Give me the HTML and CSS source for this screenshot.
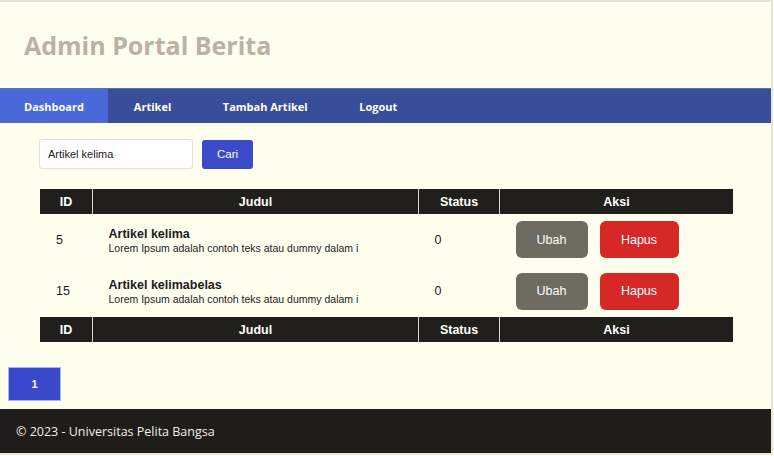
FILE: index.html
```html
<!DOCTYPE html>
<html lang="id">
<head>
<meta charset="utf-8">
<title>Admin Portal Berita</title>
<link rel="stylesheet" href="styles.css">
</head>
<body>
<div class="container">
  <header class="site-header">
    <h1 class="title">Admin Portal Berita</h1>
  </header>
  <nav class="nav">
    <a class="nav-item active" href="#">Dashboard</a>
    <a class="nav-item" href="#">Artikel</a>
    <a class="nav-item" href="#">Tambah Artikel</a>
    <a class="nav-item" href="#">Logout</a>
  </nav>
  <main class="main">
    <form class="search">
      <input class="search-input" type="text" value="Artikel kelima">
      <button class="btn btn-search" type="button">Cari</button>
    </form>
    <table class="table">
      <thead>
        <tr><th class="c-id">ID</th><th class="c-judul">Judul</th><th class="c-status">Status</th><th class="c-aksi">Aksi</th></tr>
      </thead>
      <tbody>
        <tr>
          <td>5</td>
          <td><div class="judul">Artikel kelima</div><div class="desc">Lorem Ipsum adalah contoh teks atau dummy dalam i</div></td>
          <td>0</td>
          <td><div class="aksi"><a class="btn btn-ubah" href="#">Ubah</a><a class="btn btn-hapus" href="#">Hapus</a></div></td>
        </tr>
        <tr>
          <td>15</td>
          <td><div class="judul">Artikel kelimabelas</div><div class="desc">Lorem Ipsum adalah contoh teks atau dummy dalam i</div></td>
          <td>0</td>
          <td><div class="aksi"><a class="btn btn-ubah" href="#">Ubah</a><a class="btn btn-hapus" href="#">Hapus</a></div></td>
        </tr>
      </tbody>
      <tfoot>
        <tr><th>ID</th><th>Judul</th><th>Status</th><th>Aksi</th></tr>
      </tfoot>
    </table>
    <div class="pagination"><a class="page active" href="#">1</a></div>
  </main>
  <footer class="footer">© 2023 - Universitas Pelita Bangsa</footer>
</div>
</body>
</html>
```
FILE: styles.css
```css
html, body {
  margin: 0;
  padding: 0;
  background: #fefeef;
}
.container {
  width: 771px;
  border-top: 2px solid #e8e3d8;
  border-right: 2px solid #ebe4d8;
  border-bottom: 2px solid #ebe4d8;
  background: #fefeef;
  font-family: "Liberation Sans", Arial, sans-serif;
}
.site-header {
  height: 86px;
  display: flex;
  align-items: center;
  padding-left: 24px;
}
.title {
  margin: 0;
  font-family: "Open Sans", sans-serif;
  font-weight: 700;
  font-size: 25px;
  color: #bab1a7;
}
.nav {
  display: flex;
  height: 35px;
  background: #384e9b;
  border-top: 1px solid #5b6fae;
  box-sizing: border-box;
}
.nav-item {
  display: flex;
  align-items: center;
  padding: 0 25.5px 0 26px;
  font-family: "Open Sans", sans-serif;
  font-weight: 700;
  font-size: 11px;
  color: #ffffff;
  text-decoration: none;
}
.nav-item.active {
  padding: 0 24px;
  background: #4a69d8;
}
.main {
  padding-top: 16px;
}
.search {
  display: flex;
  gap: 9px;
  margin: 0 0 0 39px;
  align-items: center;
}
.search-input {
  width: 154px;
  height: 30px;
  box-sizing: border-box;
  border: 1px solid #ecdcd4;
  border-radius: 3px;
  background: #ffffff;
  padding: 0 8px;
  font-family: "Liberation Sans", Arial, sans-serif;
  font-size: 11px;
  color: #222;
}
.btn-search {
  width: 51px;
  height: 29px;
  border: 0;
  border-radius: 3px;
  background: #3a4ac8;
  color: #fff;
  font-family: "Liberation Sans", Arial, sans-serif;
  font-size: 11.5px;
}
.table {
  margin: 20px 0 0 40px;
  width: 693px;
  border-collapse: collapse;
  table-layout: fixed;
  color: #222;
}
.table th {
  background: #211f1b;
  color: #ffffff;
  font-size: 12.5px;
  font-weight: 700;
  height: 25px;
  padding: 0;
  border-left: 1px solid #d8d4cc;
  text-align: center;
}
.table th:first-child {
  border-left: 0;
}
.c-id { width: 52px; }
.c-judul { width: 325px; }
.c-status { width: 80px; }
.table td {
  height: 51px;
  padding: 0 0 0 16px;
  font-size: 12.5px;
  vertical-align: middle;
}
.table tbody tr:last-child td {
  height: 52px;
}
.judul {
  font-weight: 700;
  font-size: 12.5px;
  line-height: 16px;
  color: #1c1c1c;
}
.desc {
  font-size: 10.5px;
  line-height: 12px;
  color: #222;
}
.aksi {
  display: flex;
  gap: 12px;
}
.btn {
  text-decoration: none;
}
.btn-ubah, .btn-hapus {
  display: flex;
  align-items: center;
  justify-content: center;
  height: 37px;
  border-radius: 6px;
  color: #fff;
  font-size: 12.5px;
}
.btn-ubah {
  width: 72px;
  background: #6e6b61;
}
.btn-hapus {
  width: 79px;
  background: #d72828;
}
.pagination {
  display: flex;
  margin: 25px 0 0 8px;
  padding-bottom: 8px;
}
.page {
  display: flex;
  align-items: center;
  justify-content: center;
  width: 53px;
  height: 34px;
  box-sizing: border-box;
  border: 1px solid #aab4ee;
  background: #3a49c9;
  color: #fff;
  font-weight: 700;
  font-size: 11px;
  text-decoration: none;
}
.footer {
  height: 44px;
  background: #1f1d1a;
  color: #f3efe4;
  font-family: "Open Sans", sans-serif;
  font-size: 12.5px;
  display: flex;
  align-items: center;
  padding-left: 16px;
}
```
